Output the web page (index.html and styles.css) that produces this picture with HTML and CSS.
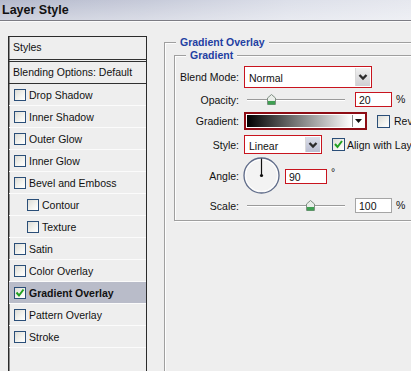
FILE: index.html
```html
<!DOCTYPE html>
<html>
<head>
    <meta charset="UTF-8">
    <title>Layer Style</title>
    <link rel="stylesheet" href="styles.css">
</head>
<body>
    <div class="titlebar"><span class="title">Layer Style</span></div>
    <div class="main">
        <div class="styles-list">
            <div class="list-head">Styles</div>
            <div class="list-blend">Blending Options: Default</div>
            <div class="item"><span class="cb"></span>Drop Shadow</div>
            <div class="item"><span class="cb"></span>Inner Shadow</div>
            <div class="item"><span class="cb"></span>Outer Glow</div>
            <div class="item"><span class="cb"></span>Inner Glow</div>
            <div class="item"><span class="cb"></span>Bevel and Emboss</div>
            <div class="item sub"><span class="cb"></span>Contour</div>
            <div class="item sub"><span class="cb"></span>Texture</div>
            <div class="item"><span class="cb"></span>Satin</div>
            <div class="item"><span class="cb"></span>Color Overlay</div>
            <div class="item selected"><span class="cb"><svg width="10" height="10" viewBox="0 0 10 10"><polyline points="1.5,4.5 4,7.5 8.5,1.5" fill="none" stroke="#21a121" stroke-width="2"/></svg></span>Gradient Overlay</div>
            <div class="item"><span class="cb"></span>Pattern Overlay</div>
            <div class="item"><span class="cb"></span>Stroke</div>
        </div>

        <div class="panel">
            <fieldset class="group outer">
                <legend>Gradient Overlay</legend>
                <fieldset class="group inner">
                    <legend>Gradient</legend>

                    <div class="row row-blend">
                        <span class="label">Blend Mode:</span>
                        <div class="select select-blend">
                            <span class="select-text">Normal</span>
                            <span class="arrow"><svg width="12" height="12" viewBox="0 0 12 12"><polyline points="2.5,4 6,7.5 9.5,4" fill="none" stroke="#2b2b2b" stroke-width="2.4"/></svg></span>
                        </div>
                    </div>

                    <div class="row row-small">
                        <span class="label">Opacity:</span>
                        <div class="slider">
                            <span class="thumb" style="left: 20px;"><svg width="9" height="11" viewBox="0 0 9 11"><polygon points="0.5,4 4.5,0.5 8.5,4 8.5,10.5 0.5,10.5" fill="#e9ede9" stroke="#7f8f82"/><rect x="1" y="7" width="7" height="3.5" fill="#3f9f52"/></svg></span>
                        </div>
                        <span class="field field-red">20</span>
                        <span class="unit">%</span>
                    </div>

                    <div class="row row-gradient">
                        <span class="label">Gradient:</span>
                        <div class="gradient-box">
                            <span class="gradient-fill"></span>
                            <span class="gradient-drop"><svg width="7" height="4" viewBox="0 0 7 4"><polygon points="0,0 7,0 3.5,4" fill="#111"/></svg></span>
                        </div>
                        <span class="cb cb-reverse"></span>
                        <span class="check-text">Reverse</span>
                    </div>

                    <div class="row row-style">
                        <span class="label">Style:</span>
                        <div class="select select-style">
                            <span class="select-text">Linear</span>
                            <span class="arrow arrow-blue"><svg width="12" height="12" viewBox="0 0 12 12"><polyline points="2.5,4 6,7.5 9.5,4" fill="none" stroke="#2b2b2b" stroke-width="2.4"/></svg></span>
                        </div>
                        <span class="cb cb-align"><svg width="11" height="11" viewBox="0 0 11 11"><polyline points="2,5 4.5,8 9,2" fill="none" stroke="#21a121" stroke-width="2"/></svg></span>
                        <span class="check-text">Align with Layer</span>
                    </div>

                    <div class="row row-angle">
                        <span class="label">Angle:</span>
                        <svg class="dial" width="37" height="37" viewBox="0 0 37 37">
                            <circle cx="18.5" cy="18.5" r="17.5" fill="#f3f3f3" stroke="#5d6a88" stroke-width="1.3"/>
                            <circle cx="18.5" cy="18.5" r="16" fill="none" stroke="#fff" stroke-width="1"/>
                            <line x1="18.5" y1="1.5" x2="18.5" y2="18.5" stroke="#111" stroke-width="1.2"/>
                            <circle cx="18.5" cy="18.5" r="1.6" fill="#111"/>
                        </svg>
                        <span class="field field-red field-angle">90</span>
                        <span class="unit unit-deg">°</span>
                    </div>

                    <div class="row row-small">
                        <span class="label">Scale:</span>
                        <div class="slider">
                            <span class="thumb" style="left: 59px;"><svg width="9" height="11" viewBox="0 0 9 11"><polygon points="0.5,4 4.5,0.5 8.5,4 8.5,10.5 0.5,10.5" fill="#e9ede9" stroke="#7f8f82"/><rect x="1" y="7" width="7" height="3.5" fill="#3f9f52"/></svg></span>
                        </div>
                        <span class="field">100</span>
                        <span class="unit">%</span>
                    </div>
                </fieldset>
            </fieldset>
        </div>
    </div>
</body>
</html>
```

FILE: styles.css
```css
html, body {
    margin: 0;
    padding: 0;
    width: 100%;
    height: 100%;
    overflow: hidden;
}

body {
    background: #eeeeee;
    font-family: "Liberation Sans", Arial, sans-serif;
    font-size: 10.5px;
    color: #111;
}

.titlebar {
    height: 20px;
    border-bottom: 1px solid #7c7c84;
    box-shadow: 0 1px 0 #fbfbfb;
    background: linear-gradient(to bottom, rgba(255,255,255,0) 0%, rgba(255,255,255,0.35) 100%),
                linear-gradient(to right, #b4b9cc 0%, #c6cad9 35%, #dcdfe9 70%, #e6e8ef 100%);
    display: flex;
    align-items: center;
    padding-left: 2px;
}

.title {
    font-size: 12.5px;
    font-weight: bold;
    color: #111;
}

.main {
    display: flex;
    padding: 15px 0 0 8px;
}

/* left list */

.styles-list {
    width: 139px;
    height: 340px;
    box-sizing: border-box;
    border: 1px solid #2b2b2b;
    box-shadow: inset 1px 0 0 #8d8d8d;
    flex-shrink: 0;
}

.list-head {
    height: 22px;
    line-height: 21px;
    padding-left: 4px;
    border-bottom: 3px double #303030;
}

.list-blend {
    height: 21px;
    line-height: 21px;
    padding-left: 4px;
    border-bottom: 1px solid #303030;
}

.item {
    height: 21px;
    border-bottom: 1px solid #fbfbfb;
    display: flex;
    align-items: center;
    padding-left: 5px;
}

    .item.sub {
        padding-left: 18px;
    }

    .item.selected {
        background: #b9bcc9;
        font-weight: bold;
    }

.cb {
    width: 10px;
    height: 10px;
    border: 1px solid #2a4e78;
    background: linear-gradient(135deg, #dcdcd6 0%, #f4f4f0 60%, #ffffff 100%);
    margin-right: 3px;
    display: flex;
    align-items: center;
    justify-content: center;
    flex-shrink: 0;
}

/* right panel */

.panel {
    margin-left: 17px;
    flex: 1;
    min-width: 0;
}

.group {
    margin: 0;
    border: 1px solid #9f9f9f;
    box-shadow: inset 1px 1px 0 #fdfdfd, 1px 1px 0 #fdfdfd;
}

    .group legend {
        font-size: 10.5px;
        font-weight: bold;
        color: #1f40a2;
        line-height: 13px;
        padding: 0 4px;
        background: #eeeeee;
    }

.outer {
    width: 300px;
    height: 400px;
    padding: 0 0 0 9px;
}

    .outer legend {
        margin-left: 2px;
    }

.inner {
    width: 290px;
    padding: 4px 0 7px 0;
    box-sizing: border-box;
}

    .inner legend {
        margin-left: 11px;
    }

.row {
    display: flex;
    align-items: center;
}

.label {
    width: 64px;
    margin-right: 5px;
    text-align: right;
    flex-shrink: 0;
}

.row-blend {
    height: 22px;
}

.row-small {
    height: 15px;
    margin-top: 4px;
}

.row-gradient {
    height: 18px;
    margin-top: 5px;
}

.row-style {
    height: 19px;
    margin-top: 5px;
}

.row-angle {
    height: 37px;
    margin-top: 3px;
}

    .row-small + .row-small {
        margin-top: 3px;
    }

.select {
    box-sizing: border-box;
    height: 100%;
    border: 1px solid #c8141e;
    background: #ffffff;
    display: flex;
    align-items: center;
    padding: 1px;
}

.select-text {
    flex: 1;
    padding-left: 3px;
    padding-top: 2px;
}

.select-blend {
    width: 128px;
}

.select-style {
    width: 78px;
}

.arrow {
    width: 14px;
    height: 100%;
    background: linear-gradient(to bottom, #f0f0f0, #cfcfd3);
    border-left: 1px solid #d9d9d9;
    display: flex;
    align-items: center;
    justify-content: center;
}

.arrow-blue {
    background: linear-gradient(to bottom, #dcdfea, #b9bdd0);
}

.slider {
    position: relative;
    width: 98px;
    height: 15px;
    margin-left: 3px;
    margin-right: 10px;
    background: linear-gradient(to bottom, transparent 7px, #9a9a9a 7px, #9a9a9a 8px, #ffffff 8px, #ffffff 9px, transparent 9px);
}

.thumb {
    position: absolute;
    top: 2px;
    width: 9px;
    height: 11px;
    display: block;
}

    .thumb svg {
        display: block;
    }

.field {
    box-sizing: border-box;
    width: 37px;
    height: 15px;
    border: 1px solid #a5a5a5;
    background: #ffffff;
    padding-left: 3px;
    line-height: 14px;
}

.field-red {
    border-color: #c8141e;
}

.field-angle {
    width: 42px;
    margin-left: 5px;
}

.unit {
    margin-left: 4px;
    padding-bottom: 2px;
}

.unit-deg {
    align-self: flex-start;
    margin-top: 9px;
}

.dial {
    display: block;
    margin-left: -1px;
}

.row-angle .field {
    margin-top: 1px;
}

.gradient-box {
    box-sizing: border-box;
    width: 123px;
    height: 18px;
    border: 2px solid #8e0c14;
    box-shadow: inset 0 0 0 1px #ffffff;
    background: #ffffff;
    display: flex;
    padding: 1px;
}

.gradient-fill {
    flex: 1;
    background: linear-gradient(to right, #000000 0%, #ffffff 100%);
    border-right: 1px solid #8a8a8a;
}

.gradient-drop {
    width: 11px;
    display: flex;
    align-items: center;
    justify-content: center;
}

.cb-reverse {
    width: 11px;
    height: 11px;
    margin-left: 10px;
    margin-right: 4px;
}

.cb-align {
    width: 11px;
    height: 11px;
    margin-left: 10px;
    margin-right: 2px;
}

.check-text {
    white-space: nowrap;
}
```
